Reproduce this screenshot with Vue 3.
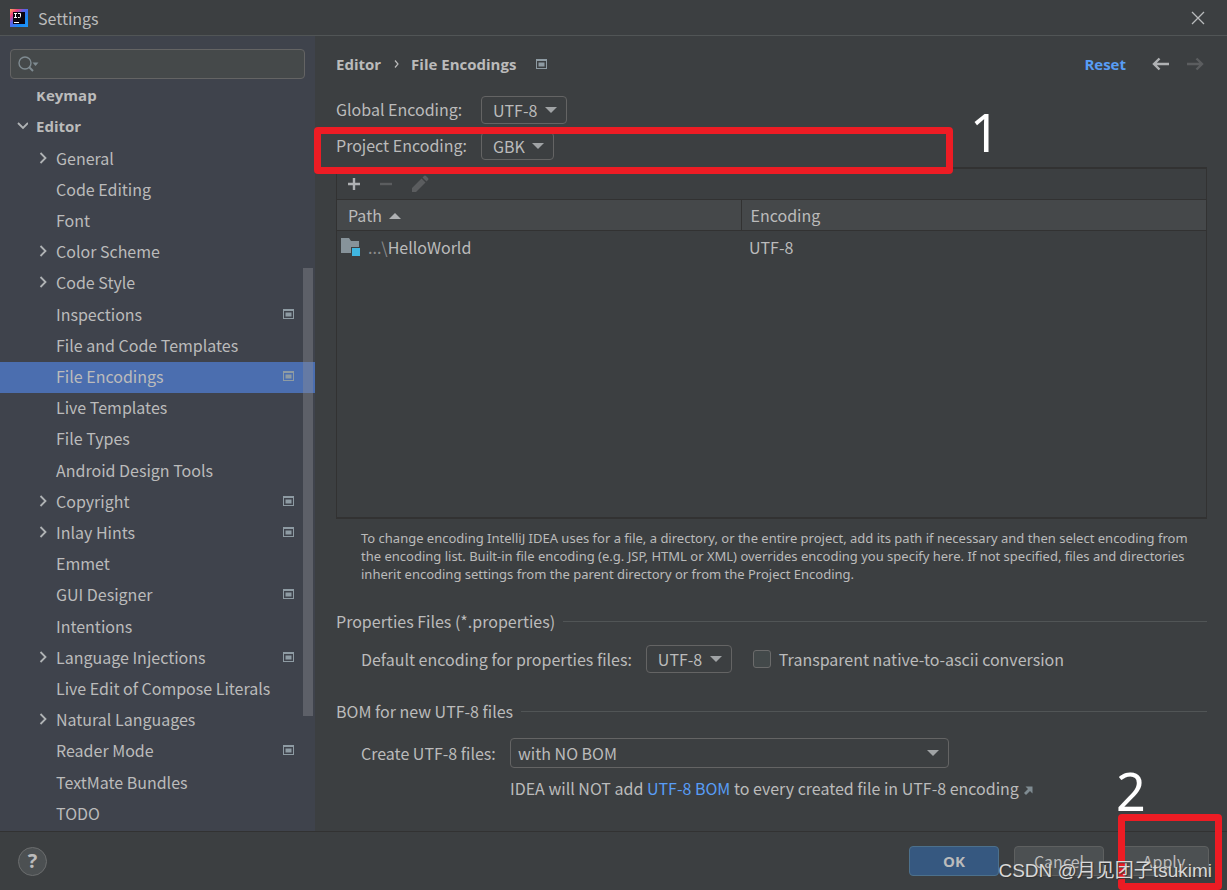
<script setup>
import { ref } from 'vue'

const tree = [
  { label: 'Keymap', level: 0 },
  { label: 'Editor', level: 0, arrow: 'down' },
  { label: 'General', level: 1, arrow: 'right' },
  { label: 'Code Editing', level: 1 },
  { label: 'Font', level: 1 },
  { label: 'Color Scheme', level: 1, arrow: 'right' },
  { label: 'Code Style', level: 1, arrow: 'right' },
  { label: 'Inspections', level: 1, project: true },
  { label: 'File and Code Templates', level: 1 },
  { label: 'File Encodings', level: 1, project: true },
  { label: 'Live Templates', level: 1 },
  { label: 'File Types', level: 1 },
  { label: 'Android Design Tools', level: 1 },
  { label: 'Copyright', level: 1, arrow: 'right', project: true },
  { label: 'Inlay Hints', level: 1, arrow: 'right', project: true },
  { label: 'Emmet', level: 1 },
  { label: 'GUI Designer', level: 1, project: true },
  { label: 'Intentions', level: 1 },
  { label: 'Language Injections', level: 1, arrow: 'right', project: true },
  { label: 'Live Edit of Compose Literals', level: 1 },
  { label: 'Natural Languages', level: 1, arrow: 'right' },
  { label: 'Reader Mode', level: 1, project: true },
  { label: 'TextMate Bundles', level: 1 },
  { label: 'TODO', level: 1 },
]
const selected = ref('File Encodings')
const query = ref('')
const ascii = ref(false)
</script>

<template>
  <div class="window">
    <header class="titlebar">
      <svg class="logo" width="18" height="18" viewBox="0 0 18 18" aria-hidden="true">
        <defs>
          <linearGradient id="ij" x1="0" y1="0" x2="1" y2="1">
            <stop offset="0" stop-color="#fdb15c" />
            <stop offset="0.22" stop-color="#f0407c" />
            <stop offset="0.42" stop-color="#5b62e8" />
            <stop offset="0.7" stop-color="#1788f5" />
            <stop offset="1" stop-color="#2196f8" />
          </linearGradient>
        </defs>
        <rect width="18" height="18" fill="url(#ij)" />
        <rect x="3" y="3" width="12" height="12" fill="#0b0410" />
        <path d="M4 4.500h3M5.500 4.500v4M4 8.500h3M8 4.500h2.500v3q0 1-1 1h-1.500M4 13.500h5" fill="none" stroke="#fff" stroke-width="1" />
      </svg>
      <h1>Settings</h1>
      <button class="plain close" aria-label="Close">
        <svg width="14" height="14" viewBox="0 0 14 14"><path d="M1 1l12 12M13 1L1 13" stroke="#b9bbbc" stroke-width="1.300" /></svg>
      </button>
    </header>

    <div class="body">
      <aside class="sidebar">
        <div class="search">
          <svg width="22" height="18" viewBox="0 0 22 18" aria-hidden="true">
            <circle cx="7" cy="8" r="6" fill="none" stroke="#7f8b91" stroke-width="1.400" />
            <path d="M11 12l4 4" stroke="#7f8b91" stroke-width="2" />
            <path d="M14.500 7.500h6l-3 3.500z" fill="#7f8b91" />
          </svg>
          <input v-model="query" type="text" aria-label="Search settings" />
        </div>
        <div class="treeview">
          <ul class="tree">
            <li v-for="item in tree" :key="item.label">
              <button
                class="node"
                :class="{ top: item.level === 0, selected: selected === item.label }"
                @click="selected = item.label"
              >
                <span class="twisty">
                  <svg v-if="item.arrow === 'right'" width="12" height="12" viewBox="0 0 12 12"><path d="M4.500 1l5 5-5 5" fill="none" stroke="#b0b3b5" stroke-width="1.800" /></svg>
                  <svg v-if="item.arrow === 'down'" width="12" height="12" viewBox="0 0 12 12"><path d="M2 3l5 5 5-5" fill="none" stroke="#b0b3b5" stroke-width="1.800" /></svg>
                </span>
                <span class="label">{{ item.label }}</span>
                <svg v-if="item.project" width="11" height="10" viewBox="0 0 11 10">
                  <path d="M0 0h11v10H0zM1 2v7h9V2z" fill="#8e9ba3" fill-rule="evenodd" />
                  <rect x="2.500" y="3.500" width="6" height="4" fill="#8e9ba3" />
                </svg>
              </button>
            </li>
          </ul>
          <div class="scrollbar"></div>
        </div>
      </aside>

      <main class="content">
        <div class="crumbs">
          <strong>Editor</strong>
          <svg class="sep" width="5" height="8" viewBox="0 0 5 8"><path d="M1 0.500l3 3.500-3 3.500" fill="none" stroke="#bbb" stroke-width="1.200" /></svg>
          <strong>File Encodings</strong>
          <svg class="badge" width="11" height="10" viewBox="0 0 11 10">
            <path d="M0 0h11v10H0zM1 2v7h9V2z" fill="#8e9ba3" fill-rule="evenodd" />
            <rect x="2.500" y="3.500" width="6" height="4" fill="#8e9ba3" />
          </svg>
          <a href="#" class="reset">Reset</a>
          <button class="plain" aria-label="Back">
            <svg width="18" height="14" viewBox="0 0 18 14"><path d="M17 7H2M7.500 1.500L2 7l5.500 5.500" fill="none" stroke="#afb1b3" stroke-width="2.400" /></svg>
          </button>
          <button class="plain forward" aria-label="Forward" disabled>
            <svg width="18" height="14" viewBox="0 0 18 14"><path d="M1 7h15M10.500 1.500L16 7l-5.500 5.500" fill="none" stroke="#5b5d5f" stroke-width="2.400" /></svg>
          </button>
        </div>

        <div class="encodings">
          <label for="global">Global Encoding:</label>
          <span class="combo">
            <select id="global"><option>UTF-8</option></select>
            <svg width="12" height="6" viewBox="0 0 12 6"><path d="M0 0h12L6 6z" fill="#a0a3a5" /></svg>
          </span>
          <label for="project">Project Encoding:</label>
          <span class="combo">
            <select id="project"><option>GBK</option></select>
            <svg width="12" height="6" viewBox="0 0 12 6"><path d="M0 0h12L6 6z" fill="#a0a3a5" /></svg>
          </span>
        </div>

        <section class="panel">
          <div class="toolbar">
            <button class="plain" aria-label="Add">
              <svg width="14" height="14" viewBox="0 0 14 14"><path d="M7 1v12M1 7h12" stroke="#afb1b3" stroke-width="2.400" /></svg>
            </button>
            <button class="plain" aria-label="Remove" disabled>
              <svg width="14" height="14" viewBox="0 0 14 14"><path d="M1 7h12" stroke="#5b5d5f" stroke-width="2.400" /></svg>
            </button>
            <button class="plain" aria-label="Edit" disabled>
              <svg width="18" height="18" viewBox="0 0 18 18"><path d="M1 17v-4L10.500 3.500l4 4L5 17zM11.500 2.500L13 1q1-1 2 0l2 2q1 1 0 2l-1.500 1.500z" fill="#5b5d5f" /></svg>
            </button>
          </div>
          <table>
            <thead>
              <tr>
                <th class="path">Path <svg width="12" height="6" viewBox="0 0 12 6"><path d="M0 6h12L6 0z" fill="#afb1b3" /></svg></th>
                <th>Encoding</th>
              </tr>
            </thead>
            <tbody>
              <tr>
                <td>
                  <span class="file">
                    <svg width="20" height="18" viewBox="0 0 20 18"><path d="M0 0h8l2 3h8v6h-8v6H0z" fill="#87939a" /><rect x="11" y="10" width="8" height="8" fill="#40b6e0" /></svg>
                    <span><span class="dim">...\</span>HelloWorld</span>
                  </span>
                </td>
                <td>UTF-8</td>
              </tr>
            </tbody>
          </table>
        </section>

        <p class="note">
          To change encoding IntelliJ IDEA uses for a file, a directory, or the entire project, add its path if necessary and then select encoding from<br />
          the encoding list. Built-in file encoding (e.g. JSP, HTML or XML) overrides encoding you specify here. If not specified, files and directories<br />
          inherit encoding settings from the parent directory or from the Project Encoding.
        </p>

        <h2>Properties Files (*.properties)</h2>
        <div class="row">
          <label for="props">Default encoding for properties files:</label>
          <span class="combo">
            <select id="props"><option>UTF-8</option></select>
            <svg width="12" height="6" viewBox="0 0 12 6"><path d="M0 0h12L6 6z" fill="#a0a3a5" /></svg>
          </span>
          <input id="ascii" v-model="ascii" type="checkbox" />
          <label for="ascii">Transparent native-to-ascii conversion</label>
        </div>

        <h2>BOM for new UTF-8 files</h2>
        <div class="bom">
          <label for="bom">Create UTF-8 files:</label>
          <span class="combo wide">
            <select id="bom"><option>with NO BOM</option></select>
            <svg width="12" height="6" viewBox="0 0 12 6"><path d="M0 0h12L6 6z" fill="#a0a3a5" /></svg>
          </span>
          <p class="hint">
            IDEA will NOT add <a href="#">UTF-8 BOM</a> to every created file in UTF-8 encoding
            <svg width="9" height="9" viewBox="0 0 9 9"><path d="M1.500 0.500h7v7l-2.500-2.500L2 9 0 7l4-4z" fill="#7f8b91" /></svg>
          </p>
        </div>
      </main>
    </div>

    <footer class="footer">
      <button class="help" aria-label="Help">?</button>
      <button class="btn primary">OK</button>
      <button class="btn">Cancel</button>
      <button class="btn">Apply</button>
    </footer>

    <div class="mark mark-one"></div>
    <div class="num num-one">1</div>
    <div class="mark mark-two"></div>
    <div class="num num-two">2</div>
    <div class="watermark">CSDN @月见团子tsukimi</div>
  </div>
</template>

<style>
body {
  background: #3c3f41;
}
</style>

<style scoped>
* {
  box-sizing: border-box;
}
.window {
  position: relative;
  display: flex;
  flex-direction: column;
  height: 100vh;
  overflow: hidden;
  background: #3c3f41;
  color: #bbbbbb;
  font: 16px/20px "Noto Sans CJK SC", sans-serif;
}
button,
input,
select {
  font: inherit;
  color: inherit;
}
svg {
  display: block;
  flex: none;
}
.plain {
  display: flex;
  padding: 0;
  border: 0;
  background: none;
}
a {
  color: #589df6;
  text-decoration: none;
}
.titlebar {
  display: flex;
  align-items: center;
  gap: 10px;
  height: 36px;
  padding: 0 22px 0 10px;
  border-bottom: 1px solid #515556;
}
h1 {
  flex: 1;
  margin: 0;
  font-size: 16px;
  font-weight: 400;
}
.body {
  display: flex;
  flex: 1;
  min-height: 0;
}
.sidebar {
  display: flex;
  flex-direction: column;
  flex: none;
  width: 315px;
  padding-top: 13px;
  background: #3f434c;
}
.search {
  display: flex;
  align-items: center;
  height: 30px;
  margin: 0 10px 13px;
  padding-left: 7px;
  border: 1px solid #646464;
  border-radius: 4px;
  background: #45494a;
}
.search input {
  flex: 1;
  min-width: 0;
  border: 0;
  outline: 0;
  background: none;
}
.treeview {
  position: relative;
  flex: 1;
  min-height: 0;
  overflow: hidden;
}
.tree {
  display: grid;
  grid-auto-rows: 1fr;
  height: calc(100% + 10px);
  margin: -11px 0 0;
  padding: 0;
  list-style: none;
}
.tree li {
  display: flex;
  min-height: 0;
}
.node {
  display: flex;
  align-items: center;
  flex: 1;
  padding: 0 21px 3px 36px;
  border: 0;
  background: none;
  text-align: left;
}
.node.top {
  padding-left: 16px;
}
.node.top,
strong,
.reset,
.primary {
  font-family: "Open Sans", sans-serif;
  font-size: 15px;
  font-weight: 700;
}
.node.selected {
  background: #4b6eaf;
}
.twisty {
  flex: none;
  width: 20px;
}
.label {
  flex: 1;
}
.scrollbar {
  position: absolute;
  top: 176px;
  right: 2px;
  width: 10px;
  height: 448px;
  background: rgba(140, 140, 148, 0.4);
}
.content {
  display: flex;
  flex-direction: column;
  flex: 1;
  min-width: 0;
  padding: 18px 20px 0 21px;
}
.crumbs {
  display: flex;
  align-items: center;
}
.sep {
  margin: 0 12px 0 13px;
}
.badge {
  margin-left: 20px;
}
.reset {
  margin-left: auto;
  margin-right: 26px;
}
.forward {
  margin: 0 3px 0 16px;
}
.encodings {
  display: grid;
  grid-template-columns: 145px max-content;
  row-gap: 8px;
  align-items: center;
  justify-items: start;
  margin-top: 22px;
}
.encodings label {
  padding-bottom: 2px;
}
.combo {
  display: inline-grid;
  align-items: center;
}
.combo > * {
  grid-area: 1 / 1;
}
.combo select {
  appearance: none;
  height: 28px;
  padding: 0 28px 0 11px;
  border: 1px solid #646464;
  border-radius: 4px;
  background: #3c3f41;
}
.combo svg {
  justify-self: end;
  margin-right: 10px;
  pointer-events: none;
}
.panel {
  height: 352px;
  margin-top: 7px;
  border: 1px solid #323232;
  border-width: 2px 1px;
}
.toolbar {
  display: flex;
  align-items: center;
  gap: 18px;
  height: 30px;
  padding-left: 10px;
}
table {
  width: 100%;
  table-layout: fixed;
  border-collapse: collapse;
}
th {
  height: 31px;
  padding: 0 9px;
  border-top: 1px solid #323232;
  border-bottom: 1px solid #323232;
  background: #45484a;
  font-weight: 400;
  text-align: left;
}
th.path {
  width: 404px;
  padding-left: 11px;
  border-right: 1px solid #323232;
}
th svg {
  display: inline-block;
  margin: 0 0 3px 4px;
}
td {
  height: 32px;
  padding: 0 8px;
}
td:first-child {
  padding-left: 4px;
}
.file {
  display: flex;
  align-items: center;
  gap: 7px;
}
.dim {
  color: #8c8c8c;
}
.note {
  margin: 10px 0 0 25px;
  font-family: "Noto Sans", sans-serif;
  font-size: 13px;
  line-height: 18px;
  white-space: nowrap;
}
h2 {
  display: flex;
  align-items: center;
  gap: 8px;
  margin: 28px 0 0;
  font-size: 16px;
  font-weight: 400;
}
h2::after {
  content: "";
  flex: 1;
  height: 1px;
  background: #515556;
}
.row {
  display: flex;
  align-items: center;
  margin: 14px 0 0 25px;
}
.row .combo {
  margin-left: 14px;
}
.row input {
  appearance: none;
  width: 18px;
  height: 18px;
  margin: 0 8px 0 21px;
  border: 1px solid #6b6b6b;
  border-radius: 3px;
  background: #43494a;
}
.bom {
  display: grid;
  grid-template-columns: 149px 439px;
  align-items: center;
  row-gap: 10px;
  margin: 17px 0 0 25px;
}
.wide select {
  height: 30px;
  padding-left: 7px;
}
.hint {
  grid-column: 2;
  margin: 0;
  white-space: nowrap;
}
.hint svg {
  display: inline-block;
  margin-left: 2px;
}
.footer {
  display: flex;
  align-items: center;
  gap: 15px;
  flex: none;
  height: 59px;
  padding: 0 18px;
  border-top: 1px solid #323232;
}
.help {
  width: 29px;
  height: 29px;
  margin-right: auto;
  padding: 0;
  border: 1px solid #6b6d6e;
  border-radius: 50%;
  background: #4c5052;
  font-family: "Open Sans", sans-serif;
  font-size: 20px;
  font-weight: 700;
}
.btn {
  width: 90px;
  height: 30px;
  padding: 0;
  border: 1px solid #5e6060;
  border-radius: 4px;
  background: #4c5052;
}
.btn.primary {
  border-color: #4c708c;
  background: #365880;
}
.mark {
  position: absolute;
  border: 7px solid #ed1c24;
  border-radius: 4px;
  pointer-events: none;
}
.mark-one {
  top: 127px;
  left: 314px;
  width: 639px;
  height: 47px;
}
.mark-two {
  right: 5px;
  bottom: 0;
  width: 104px;
  height: 76px;
}
.num {
  position: absolute;
  color: #ffffff;
  font-family: "Noto Sans", sans-serif;
  font-size: 52px;
  line-height: 60px;
}
.num-one {
  top: 102px;
  left: 970px;
}
.num-two {
  top: 761px;
  left: 1116px;
}
.watermark {
  position: absolute;
  right: 15px;
  bottom: 7px;
  color: #d8d8d8;
  font: 19px/24px "Liberation Sans", "Noto Sans CJK SC", sans-serif;
  text-shadow: 1px 1px 1px #333333;
  pointer-events: none;
}
</style>
